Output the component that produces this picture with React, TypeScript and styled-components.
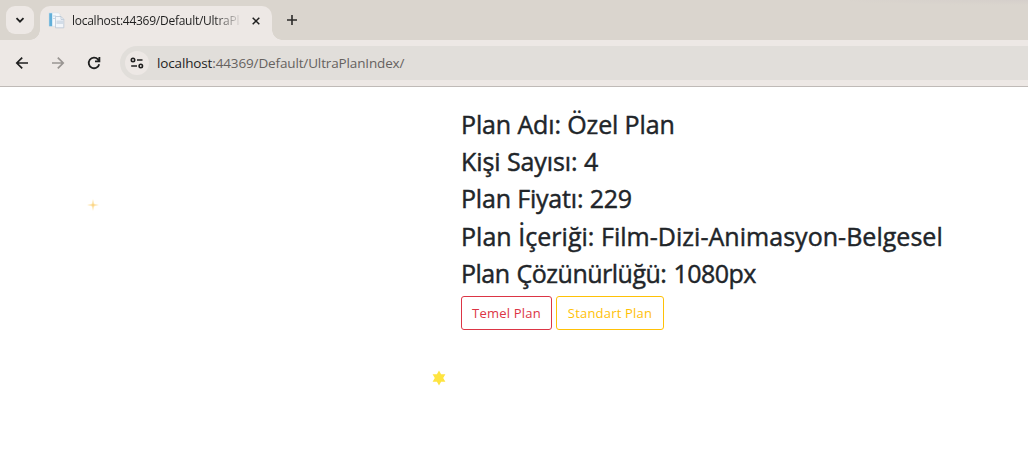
import React from "react";
import styled, { createGlobalStyle } from "styled-components";

const GlobalStyle = createGlobalStyle`
  * { box-sizing: border-box; }
  body { margin: 0; background: #fff; overflow: hidden; font-family: "Open Sans", "Noto Sans", sans-serif; }
`;

const Window = styled.div`
  position: relative;
  display: flex;
  flex-direction: column;
  height: 476px;
  overflow: hidden;
`;

const TabStrip = styled.div`
  display: flex;
  height: 40px;
  padding: 6px 0 0 6px;
  background: radial-gradient(ellipse 200px 5px at 180px 0, #d5cfcb, rgba(213, 207, 203, 0)) 850px 0 / 178px 5px no-repeat, #dad5ce;
`;

const TabSearch = styled.button`
  display: grid;
  place-items: center;
  width: 28px;
  height: 28px;
  margin: 0 6px 0 0;
  padding: 0;
  border: 0;
  border-radius: 9px;
  background: #ede8e5;
`;

const Tab = styled.div`
  position: relative;
  display: flex;
  align-items: center;
  width: 232px;
  height: 34px;
  padding: 0 8px 5px 8px;
  border-radius: 10px 10px 0 0;
  background: #ede8e5;
  &::before, &::after {
    content: "";
    position: absolute;
    bottom: 0;
    width: 10px;
    height: 10px;
  }
  &::before { left: -10px; background: radial-gradient(circle at 0 0, transparent 9.5px, #ede8e5 10px); }
  &::after { right: -10px; background: radial-gradient(circle at 100% 0, transparent 9.5px, #ede8e5 10px); }
`;

const TabTitle = styled.span`
  width: 168px;
  margin-left: 7px;
  overflow: hidden;
  white-space: nowrap;
  font-size: 12px;
  line-height: 20px;
  letter-spacing: -0.26px;
  color: #1f1f1f;
  mask-image: linear-gradient(90deg, #000 142px, transparent 170px);
`;

const TabClose = styled.span`
  display: flex;
  margin-left: 12px;
`;

const NewTab = styled.span`
  display: flex;
  margin: 8px 0 0 14px;
  height: 12px;
`;

const Toolbar = styled.div`
  display: flex;
  align-items: center;
  height: 47px;
  padding-left: 14px;
  border-bottom: 1px solid #bfbab7;
  background: #ede8e5;
`;

const NavIcon = styled.span`
  display: flex;
  width: 16px;
  margin-right: 20px;
`;

const AddressBar = styled.div`
  display: flex;
  flex: 1;
  align-items: center;
  height: 34px;
  margin-left: -2px;
  padding-left: 5px;
  border-radius: 17px 0 0 17px;
  background: #e1deda;
`;

const SiteInfo = styled.span`
  display: grid;
  place-items: center;
  width: 24px;
  height: 24px;
  border-radius: 50%;
  background: #ede8e5;
`;

const Url = styled.span`
  margin-left: 8px;
  font-size: 13.5px;
  line-height: 20px;
  letter-spacing: -0.14px;
  color: #66625f;
  b { font-weight: 400; color: #1f1f1f; }
`;

const Page = styled.main`
  padding: 22.8px 0 0 461px;
`;

const PlanLine = styled.h3<{ $spacing: number; $wordSpacing?: number }>`
  margin: 0 0 8px;
  font-size: 25px;
  font-weight: 500;
  line-height: 29.25px;
  letter-spacing: ${(p) => p.$spacing}px;
  word-spacing: ${(p) => p.$wordSpacing ?? 0}px;
  white-space: nowrap;
  color: #212529;
  -webkit-text-stroke: 0.45px #212529;
`;

const Actions = styled.div`
  display: flex;
  gap: 4px;
`;

const PlanButton = styled.button<{ $color: string; $width: number }>`
  width: ${(p) => p.$width}px;
  height: 34px;
  padding: 0;
  border: 1px solid ${(p) => p.$color};
  border-radius: 3px;
  background: #fff;
  font: 400 13px "Open Sans", "Noto Sans", sans-serif;
  letter-spacing: 0.2px;
  white-space: nowrap;
  color: ${(p) => p.$color};
`;

const Particle = styled.svg<{ $x: number; $y: number }>`
  position: absolute;
  left: ${(p) => p.$x}px;
  top: ${(p) => p.$y}px;
`;

const planLines = [
  { text: "Plan Adı: Özel Plan", spacing: -0.13 },
  { text: "Kişi Sayısı: 4", spacing: -0.09 },
  { text: "Plan Fiyatı: 229", spacing: -0.18 },
  { text: "Plan İçeriği: Film-Dizi-Animasyon-Belgesel", spacing: 0.03 },
  { text: "Plan Çözünürlüğü: 1080px", spacing: -0.5, wordSpacing: 1 },
];

const PageIcon = () => (
  <svg width="17" height="17" viewBox="0 0 17 17">
    <path d="M1 .8h9.5L12 2.300v12H1z" fill="#f6f9fc" stroke="#d3dde6" strokeWidth=".6" />
    <path d="M1.200 1.200h3v13h-3z" fill="#62afd9" />
    <path d="M5 4h3M5 6.500h2" stroke="#c5d9ea" />
    <path d="M7.500 4.500h5.500l2.800 2.800v8.500H7.500z" fill="#f3f6fa" stroke="#b3c2d1" strokeWidth=".7" />
    <path d="M8.500 8.500h6.500v3.500H8.500z" fill="#d3dde8" />
    <path d="M13 4.500v3h2.800" fill="none" stroke="#b3c2d1" strokeWidth=".7" />
  </svg>
);

export default function App() {
  return (
    <Window>
      <GlobalStyle />
      <TabStrip>
        <TabSearch>
          <svg width="10" height="8" viewBox="0 0 10 8" fill="none" stroke="#1f1f1f" strokeWidth="1.8">
            <path d="M1.5 2.2 5 5.7l3.5-3.5" />
          </svg>
        </TabSearch>
        <Tab>
          <PageIcon />
          <TabTitle>localhost:44369/Default/UltraPlanIndex/</TabTitle>
          <TabClose>
            <svg width="8" height="8" viewBox="0 0 8 8" stroke="#1f1f1f" strokeWidth="1.5">
              <path d="m.7.7 6.6 6.6M7.3.7.7 7.3" />
            </svg>
          </TabClose>
        </Tab>
        <NewTab>
          <svg width="12" height="12" viewBox="0 0 12 12" stroke="#2b2a29" strokeWidth="1.6">
            <path d="M6 1v10M1 6h10" />
          </svg>
        </NewTab>
      </TabStrip>
      <Toolbar>
        <NavIcon>
          <svg width="16" height="16" viewBox="0 0 16 16" fill="none" stroke="#1f1f1f" strokeWidth="1.7">
            <path d="M14 8H3M8.2 2.6 2.8 8l5.4 5.4" />
          </svg>
        </NavIcon>
        <NavIcon>
          <svg width="16" height="16" viewBox="0 0 16 16" fill="none" stroke="#999592" strokeWidth="1.7">
            <path d="M2 8h11M7.8 2.6 13.2 8l-5.4 5.4" />
          </svg>
        </NavIcon>
        <NavIcon>
          <svg width="16" height="16" viewBox="0 0 16 16" fill="none" stroke="#1f1f1f" strokeWidth="1.8">
            <path d="M13.2 9.2A5.3 5.3 0 1 1 12 4.4L13.3 6M13.4 2v4.4H9" />
          </svg>
        </NavIcon>
        <AddressBar>
          <SiteInfo>
            <svg width="14" height="12" viewBox="0 0 14 12" fill="none" stroke="#1f1f1f" strokeWidth="1.6">
              <circle cx="3" cy="3" r="1.7" />
              <path d="M7 3h5.5M1.2 9H7" />
              <circle cx="10.8" cy="9" r="1.7" />
            </svg>
          </SiteInfo>
          <Url><b>localhost</b>:44369/Default/UltraPlanIndex/</Url>
        </AddressBar>
      </Toolbar>
      <Page>
        {planLines.map((line) => (
          <PlanLine key={line.text} $spacing={line.spacing} $wordSpacing={line.wordSpacing}>
            {line.text}
          </PlanLine>
        ))}
        <Actions>
          <PlanButton $color="#dc3545" $width={91}>Temel Plan</PlanButton>
          <PlanButton $color="#ffc107" $width={108}>Standart Plan</PlanButton>
        </Actions>
      </Page>
      <Particle $x={87} $y={199} width="12" height="12" viewBox="0 0 12 12">
        <path d="m6 0 1.200 4.800 4.800 1.200-4.800 1.200L6 12l-1.200-4.800L0 6l4.800-1.200z" fill="#fee9b8" />
        <circle cx="6" cy="6" r="1.500" fill="#fbd68a" />
      </Particle>
      <Particle $x={431} $y={370} width="16" height="16" viewBox="0 0 16 16">
        <path d="m8 .5 2.1 3.8h4.3L12.2 8l2.2 3.7h-4.3L8 15.5l-2.1-3.8H1.6L3.8 8 1.6 4.3h4.3z" fill="#fee440" />
      </Particle>
    </Window>
  );
}
